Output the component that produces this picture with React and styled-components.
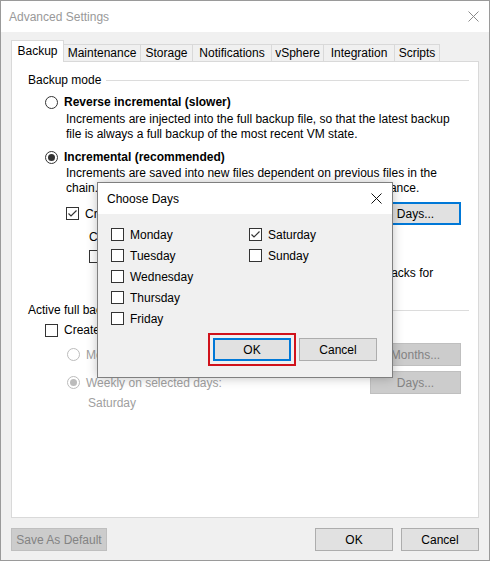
import React from 'react'
import styled, { createGlobalStyle } from 'styled-components'

const GlobalStyle = createGlobalStyle`
  html, body { margin: 0; padding: 0; }
  body {
    font-family: "Liberation Sans", Arial, sans-serif;
    font-size: 12px;
    color: #000;
    background: #fff;
  }
  * { box-sizing: border-box; }
`

const tabs = [
  { label: 'Backup', width: 53, active: true },
  { label: 'Maintenance', width: 78 },
  { label: 'Storage', width: 53 },
  { label: 'Notifications', width: 80 },
  { label: 'vSphere', width: 53 },
  { label: 'Integration', width: 72 },
  { label: 'Scripts', width: 46 },
]

const days = [
  ['Monday', false], ['Saturday', true],
  ['Tuesday', false], ['Sunday', false],
  ['Wednesday', false], null,
  ['Thursday', false], null,
  ['Friday', false], null,
]

const CloseIcon = ({ color }) => (
  <svg width="11" height="11" viewBox="0 0 11 11">
    <path d="M0.5 0.5 L10.5 10.5 M10.5 0.5 L0.5 10.5" stroke={color} strokeWidth="1" fill="none" />
  </svg>
)

const Check = ({ checked }) => (
  <CheckBox>
    {checked && (
      <svg width="11" height="11" viewBox="0 0 11 11">
        <path d="M1.5 5.5 L4 8 L9.5 2.5" stroke="#333" strokeWidth="1.2" fill="none" />
      </svg>
    )}
  </CheckBox>
)

const App = () => {
  return (
    <>
      <GlobalStyle />
      <Window>
        <TitleBar>
          <Title $inactive>Advanced Settings</Title>
          <CloseIcon color="#8a8a8a" />
        </TitleBar>

        <Body>
          <TabStrip>
            {tabs.map((t, i) => (
              <Tab key={t.label} $width={t.width} $active={t.active} $first={i === 0}>
                {t.label}
              </Tab>
            ))}
          </TabStrip>

          <Panel>
            <GroupHeader $top={10}>
              <span>Backup mode</span>
              <Rule />
            </GroupHeader>

            <Row $top={6} $indent={17}>
              <Radio />
              <Bold>Reverse incremental (slower)</Bold>
            </Row>
            <Desc $top={2} $indent={38}>
              <div>Increments are injected into the full backup file, so that the latest backup</div>
              <div>file is always a full backup of the most recent VM state.</div>
            </Desc>

            <Row $top={7} $indent={17}>
              <Radio $checked />
              <Bold>Incremental (recommended)</Bold>
            </Row>
            <Desc $top={1} $indent={38}>
              <div>Increments are saved into new files dependent on previous files in the</div>
              <div>chain. This mode provides the fastest overall backup performance.</div>
            </Desc>

            <ButtonRow $top={5} $indent={38} $height={25}>
              <Label>
                <Check checked />
                <span>Create synthetic full backups periodically on</span>
              </Label>
              <Button $focused>Days...</Button>
            </ButtonRow>
            <Row $top={3} $indent={61}>
              <span>Create on: Saturday</span>
            </Row>
            <Row $top={3} $indent={61}>
              <Check />
              <span>Transform previous backup chains into rollbacks</span>
            </Row>
            <Desc $top={2} $indent={81}>
              <div>Previous full backup chains are transformed into rollbacks for</div>
            </Desc>

            <GroupHeader $top={21}>
              <span>Active full backup</span>
              <Rule />
            </GroupHeader>
            <Row $top={4} $indent={17}>
              <Check />
              <span>Create active full backups periodically</span>
            </Row>
            <ButtonRow $top={5} $indent={39} $height={23}>
              <Label $disabled>
                <Radio $disabled />
                <span>Monthly on: First Monday of January</span>
              </Label>
              <Button $disabled>Months...</Button>
            </ButtonRow>
            <ButtonRow $top={5} $indent={39} $height={23}>
              <Label $disabled>
                <Radio $disabled $checked />
                <span>Weekly on selected days:</span>
              </Label>
              <Button $disabled>Days...</Button>
            </ButtonRow>
            <Row $top={1} $indent={60} $disabled>
              <span>Saturday</span>
            </Row>
          </Panel>

          <Footer>
            <Button $disabled $width={96}>Save As Default</Button>
            <FooterRight>
              <Button $width={78}>OK</Button>
              <Button $width={78}>Cancel</Button>
            </FooterRight>
          </Footer>
        </Body>

        <Dialog>
          <DialogTitle>
            <Title>Choose Days</Title>
            <CloseIcon color="#111" />
          </DialogTitle>
          <DialogBody>
            <DayGrid>
              {days.map((d, i) =>
                d ? (
                  <DayItem key={d[0]}>
                    <Check checked={d[1]} />
                    <span>{d[0]}</span>
                  </DayItem>
                ) : (
                  <span key={i} />
                )
              )}
            </DayGrid>
            <DialogButtons>
              <Highlight>
                <Button $focused $width={78}>OK</Button>
              </Highlight>
              <Button $width={78}>Cancel</Button>
            </DialogButtons>
          </DialogBody>
        </Dialog>
      </Window>
    </>
  )
}

export default App

const Window = styled.div`
  position: relative;
  width: 490px;
  height: 561px;
  border: 1px solid #9a9a9a;
  background: #f0f0f0;
  display: flex;
  flex-direction: column;
`

const TitleBar = styled.div`
  height: 31px;
  background: #fff;
  display: flex;
  align-items: center;
  justify-content: space-between;
  padding: 0 10px 0 8px;
  flex-shrink: 0;
`

const Title = styled.span`
  font-size: 12px;
  color: ${(p) => (p.$inactive ? '#999' : '#000')};
`

const Body = styled.div`
  flex: 1;
  display: flex;
  flex-direction: column;
  padding: 8px 10px 0 10px;
`

const TabStrip = styled.div`
  display: flex;
  align-items: flex-end;
  height: 21px;
`

const Tab = styled.div`
  position: relative;
  z-index: ${(p) => (p.$active ? 2 : 1)};
  width: ${(p) => p.$width}px;
  height: ${(p) => (p.$active ? 22 : 17)}px;
  margin-left: ${(p) => (p.$first ? 0 : -1)}px;
  margin-bottom: ${(p) => (p.$active ? -1 : 0)}px;
  display: flex;
  align-items: center;
  justify-content: center;
  padding-bottom: ${(p) => (p.$active ? 2 : 0)}px;
  background: ${(p) => (p.$active ? '#fff' : '#f0f0f0')};
  border: 1px solid #d9d9d9;
  border-bottom: none;
  white-space: nowrap;
`

const Panel = styled.div`
  height: 457px;
  background: #fff;
  border: 1px solid #d9d9d9;
  padding: 0 9px 0 16px;
  display: flex;
  flex-direction: column;
  overflow: hidden;
`

const GroupHeader = styled.div`
  display: flex;
  align-items: center;
  height: 16px;
  margin-top: ${(p) => p.$top}px;
  white-space: nowrap;
`

const Rule = styled.div`
  flex: 1;
  height: 1px;
  background: #dcdcdc;
  margin-left: 5px;
`

const Row = styled.div`
  display: flex;
  align-items: center;
  gap: 6px;
  height: 16px;
  margin-top: ${(p) => p.$top}px;
  padding-left: ${(p) => p.$indent}px;
  color: ${(p) => (p.$disabled ? '#a0a0a0' : '#000')};
  white-space: nowrap;
`

const ButtonRow = styled.div`
  display: flex;
  align-items: center;
  justify-content: space-between;
  height: ${(p) => p.$height}px;
  margin-top: ${(p) => p.$top}px;
  padding-left: ${(p) => p.$indent}px;
  padding-right: 8px;
  white-space: nowrap;
`

const Label = styled.div`
  display: flex;
  align-items: center;
  gap: 6px;
  color: ${(p) => (p.$disabled ? '#a0a0a0' : '#000')};
`

const Bold = styled.span`
  font-weight: bold;
`

const Desc = styled.div`
  margin-top: ${(p) => p.$top}px;
  padding-left: ${(p) => p.$indent}px;
  line-height: 15px;
  white-space: nowrap;
`

const Radio = styled.span`
  width: 13px;
  height: 13px;
  flex-shrink: 0;
  border-radius: 50%;
  border: 1px solid ${(p) => (p.$disabled ? '#bcbcbc' : '#333')};
  background: #fff;
  display: flex;
  align-items: center;
  justify-content: center;
  &::after {
    content: '';
    display: ${(p) => (p.$checked ? 'block' : 'none')};
    width: 7px;
    height: 7px;
    border-radius: 50%;
    background: ${(p) => (p.$disabled ? '#bcbcbc' : '#333')};
  }
`

const CheckBox = styled.span`
  width: 13px;
  height: 13px;
  flex-shrink: 0;
  border: 1px solid #333;
  background: #fff;
  display: flex;
  align-items: center;
  justify-content: center;
`

const Button = styled.button`
  width: ${(p) => p.$width || 91}px;
  height: 23px;
  padding: 0;
  font-family: inherit;
  font-size: 12px;
  color: ${(p) => (p.$disabled ? '#838383' : '#000')};
  background: ${(p) => (p.$disabled ? '#cccccc' : '#e1e1e1')};
  border: ${(p) =>
    p.$focused ? '2px solid #0078d7' : p.$disabled ? '1px solid #bfbfbf' : '1px solid #adadad'};
  flex-shrink: 0;
`

const Footer = styled.div`
  display: flex;
  justify-content: space-between;
  margin-top: 10px;
`

const FooterRight = styled.div`
  display: flex;
  gap: 8px;
`

const Dialog = styled.div`
  position: absolute;
  left: 96px;
  top: 181px;
  width: 296px;
  height: 196px;
  border: 1px solid #7f7f7f;
  background: #f0f0f0;
  box-shadow: 0 0 10px rgba(0, 0, 0, 0.25);
  display: flex;
  flex-direction: column;
`

const DialogTitle = styled.div`
  height: 31px;
  background: #fff;
  display: flex;
  align-items: center;
  justify-content: space-between;
  padding: 0 10px 0 9px;
  flex-shrink: 0;
`

const DialogBody = styled.div`
  flex: 1;
  display: flex;
  flex-direction: column;
  padding: 10px 15px 0 13px;
`

const DayGrid = styled.div`
  display: grid;
  grid-template-columns: 138px 1fr;
  grid-auto-rows: 21px;
`

const DayItem = styled.label`
  display: flex;
  align-items: center;
  gap: 6px;
`

const DialogButtons = styled.div`
  display: flex;
  align-items: center;
  justify-content: flex-end;
  gap: 3px;
  margin-top: 4px;
`

const Highlight = styled.span`
  display: flex;
  padding: 3px;
  border: 2px solid #d0121b;
`
